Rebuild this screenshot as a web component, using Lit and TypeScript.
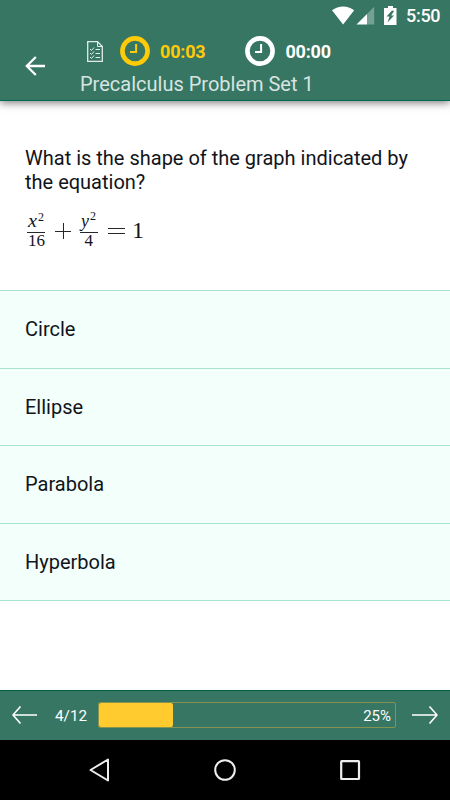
import { LitElement, html, css } from "lit";
import { customElement, property } from "lit/decorators.js";

@customElement("quiz-timer")
class QuizTimer extends LitElement {
  @property() time = "00:00";

  static styles = css`
    :host { display: flex; align-items: center; gap: 10px; }
    svg { display: block; }
    .time { font: 700 18px/22px Roboto, sans-serif; letter-spacing: -0.2px; padding-top: 1px; }
  `;

  render() {
    return html`
      <svg width="30" height="30" viewBox="0 0 30 30" fill="none" stroke="currentColor">
        <circle cx="15" cy="15" r="12.6" stroke-width="4.6" />
        <path d="M16.1 8V16.1H10" stroke-width="2" />
      </svg>
      <span class="time">${this.time}</span>
    `;
  }
}

@customElement("quiz-formula")
class QuizFormula extends LitElement {
  static styles = css`
    :host { display: block; }
    svg { display: block; }
    text { font-family: "Liberation Serif", serif; fill: #14141c; }
    .var { font-style: italic; font-size: 18px; }
    .den { font-size: 17px; }
    .sup { font-size: 12px; }
    .num { font-size: 24px; }
    path { stroke: #26262c; stroke-width: 1; fill: none; }
  `;

  render() {
    return html`
      <svg width="120" height="40" viewBox="0 0 120 40">
        <text class="var" x="3" y="17" textLength="9" lengthAdjust="spacingAndGlyphs">x</text>
        <text class="sup" x="13" y="11">2</text>
        <path d="M2 22.5H20" />
        <text class="den" x="3" y="36">16</text>
        <path d="M30 21.5H46M38.5 13V29" />
        <text class="var" x="56" y="17" textLength="8" lengthAdjust="spacingAndGlyphs">y</text>
        <text class="sup" x="65" y="10">2</text>
        <path d="M55 22.5H73" />
        <text class="den" x="59.5" y="36">4</text>
        <path d="M83 18.5H100M83 23.5H100" />
        <text class="num" x="107" y="28">1</text>
      </svg>
    `;
  }
}

@customElement("app-root")
class AppRoot extends LitElement {
  static styles = css`
    :host {
      display: flex; flex-direction: column; width: 450px; height: 800px; overflow: hidden;
      background: #fff; color: #11141a; font-family: Roboto, sans-serif;
    }
    svg { display: block; flex: none; }
    .header {
      display: flex; flex-direction: column; flex: none; height: 101px; box-sizing: border-box;
      background: #367663; color: #fff; border-bottom: 1px solid #006a51;
      box-shadow: 0 2px 8px rgba(0, 0, 0, 0.5);
    }
    .status { display: flex; justify-content: flex-end; height: 32px; padding-right: 9px; align-items: center; }
    .clock { width: 35px; margin-left: 8px; font: 500 18px/32px Roboto, sans-serif; letter-spacing: -0.3px; }
    .bar { display: flex; height: 68px; }
    .back { margin: 24px 34px 0 25px; }
    .heading { display: flex; flex-direction: column; }
    .timers { display: flex; align-items: center; height: 38px; padding-left: 7px; }
    .running { color: #ffca08; margin-left: 17px; }
    .total { margin-left: 40px; }
    .title { font-size: 20px; line-height: 28px; color: #d7e4e0; }
    .question { flex: none; height: 189px; box-sizing: border-box; padding: 45px 25px 0; }
    .prompt { margin: 0 0 16px; font-size: 20px; line-height: 24px; }
    .options { flex: none; border-top: 1px solid #a5e2cd; background: #f2fffb; }
    .option {
      display: flex; align-items: center; height: 77.5px; box-sizing: border-box; padding-left: 25px;
      border-bottom: 1px solid #a8e2d0; font-size: 20px;
    }
    .spacer { flex: 1; }
    .footer {
      display: flex; align-items: center; flex: none; height: 50px; box-sizing: border-box;
      padding: 0 12px 1px; background: #367663; color: #fff; border-top: 1px solid #005e3d;
    }
    .count { width: 43px; margin-left: 18px; padding-top: 1px; font-size: 15.3px; }
    .progress {
      display: flex; width: 298px; height: 26px; box-sizing: border-box; border: 1px solid #84934f;
      border-radius: 2px; align-items: center; justify-content: space-between;
    }
    .fill { height: 24px; background: #ffcb2f; border-radius: 2px; }
    .percent { font-size: 15px; padding: 1px 4px 0 0; }
    .next { margin-left: 16px; }
    .nav { display: flex; flex: none; height: 60px; align-items: center; justify-content: center; gap: 103px; background: #000; }
  `;

  private options = ["Circle", "Ellipse", "Parabola", "Hyperbola"];
  private percent = 25;

  render() {
    return html`
      <div class="header">
        <div class="status">
          <svg width="66" height="20" viewBox="0 0 66 20">
            <path fill="#fff" d="M0 4.2C6.5-.9 15.700-.9 22.200 4.200L11.100 18.500Z" />
            <path fill="#fff" d="M24.500 18.500 35 8V18.500Z" />
            <path fill="#74a194" d="M35 8 42.200 .8V18.500H35Z" />
            <path fill="#fff" d="M56 0H61V2H64.500V19H52V2H56Z" />
            <path fill="#367663" d="M60 4.500 54.500 10.500H57.500L55.500 16.500 62 9.500H59.200L62 5Z" />
          </svg>
          <span class="clock">5:50</span>
        </div>
        <div class="bar">
          <svg class="back" width="21" height="20" viewBox="0 0 21 20" fill="none" stroke="#fff" stroke-width="2.3">
            <path d="M20 10H2M10.800 1 1.800 10 10.800 19" />
          </svg>
          <div class="heading">
            <div class="timers">
              <svg width="16" height="21" viewBox="0 0 16 21" fill="none" stroke="#e3ece9">
                <path d="M.7.7H10.500L15.300 5.500V20.300H.7Z" stroke-width="1.300" />
                <path d="M10.500.7V5.500H15.300M8.500 8.500H13M8.500 12.500H13M8.500 16.500H13" />
                <path d="M3 8 4.500 9.500 7 6.500M3 12 4.500 13.500 7 10.500M3 16 4.500 17.500 7 14.500" />
              </svg>
              <quiz-timer class="running" time="00:03"></quiz-timer>
              <quiz-timer class="total" time="00:00"></quiz-timer>
            </div>
            <div class="title">Precalculus Problem Set 1</div>
          </div>
        </div>
      </div>
      <div class="question">
        <p class="prompt">What is the shape of the graph indicated by the equation?</p>
        <quiz-formula></quiz-formula>
      </div>
      <div class="options">
        ${this.options.map((o) => html`<div class="option">${o}</div>`)}
      </div>
      <div class="spacer"></div>
      <div class="footer">
        <svg width="25" height="18" viewBox="0 0 25 18" fill="none" stroke="#fff" stroke-width="1.600">
          <path d="M25 9H1M8.500.5 1 9 8.500 17.500" />
        </svg>
        <span class="count">4/12</span>
        <div class="progress">
          <div class="fill" style="width:${this.percent}%"></div>
          <span class="percent">${this.percent}%</span>
        </div>
        <svg class="next" width="26" height="18" viewBox="0 0 26 18" fill="none" stroke="#fff" stroke-width="1.600">
          <path d="M0 9H25M17.500.5 25 9 17.500 17.500" />
        </svg>
      </div>
      <div class="nav">
        <svg width="22" height="24" viewBox="0 0 22 24" fill="none" stroke="#eee" stroke-width="2">
          <path d="M19 1.500V22.500L1.500 12Z" stroke-linejoin="round" />
        </svg>
        <svg width="22" height="22" viewBox="0 0 22 22" fill="none" stroke="#eee" stroke-width="2">
          <circle cx="11" cy="11" r="9.800" />
        </svg>
        <svg width="22" height="22" viewBox="0 0 22 22" fill="none" stroke="#eee" stroke-width="2.200">
          <rect x="2.200" y="2.200" width="17.800" height="17.800" rx=".5" />
        </svg>
      </div>
    `;
  }
}
